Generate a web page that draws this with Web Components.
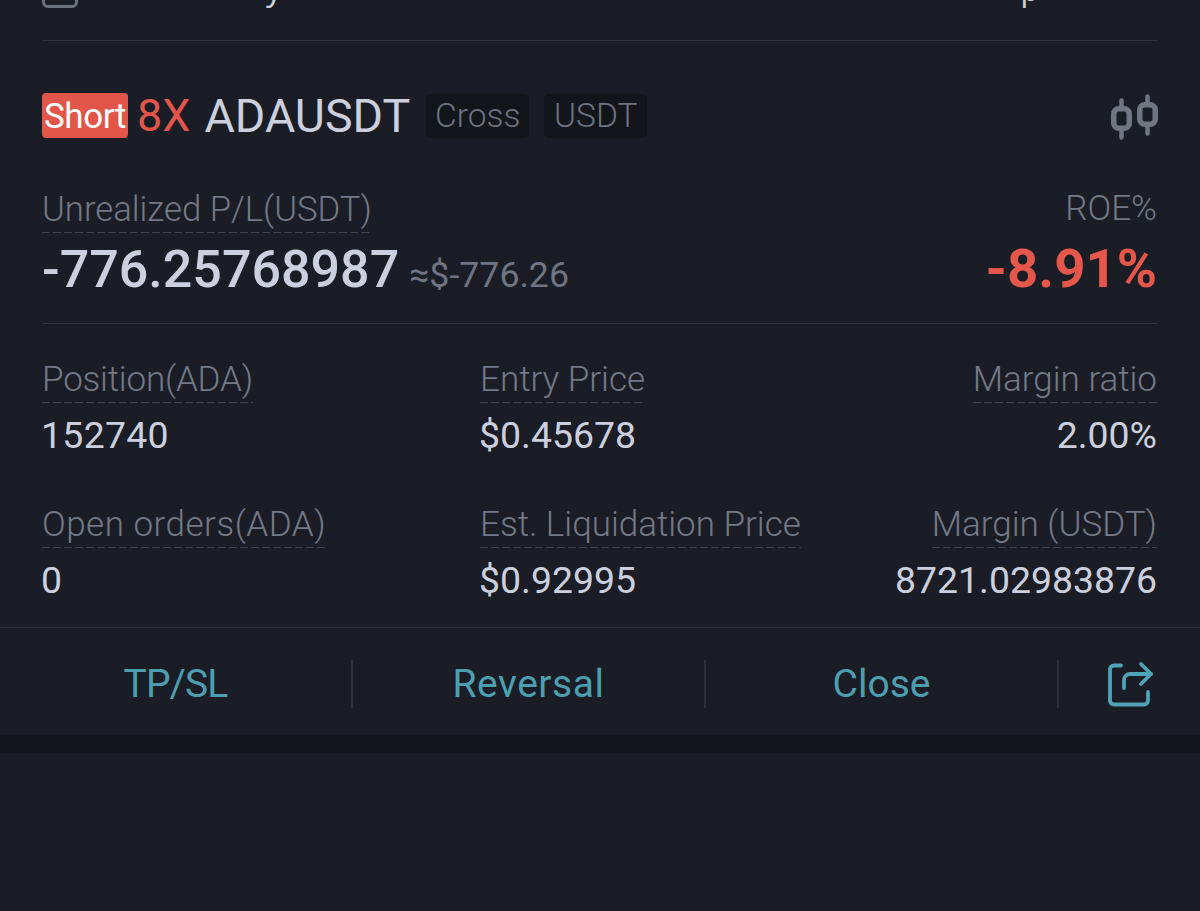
<!DOCTYPE html>
<html><head><meta charset="utf-8"><style>
html,body{margin:0;height:100%;background:#1a1d25}
body{font-family:"Noto Sans",Roboto,sans-serif;overflow:hidden}
</style></head><body>
<position-card>
  <top-remnant slot="top"></top-remnant>
  <card-title slot="title"></card-title>
  <pnl-block slot="pnl"></pnl-block>
  <stat-grid slot="stats">
    <stat-item first label="Position(ADA)" value="152740" vs=".3"></stat-item>
    <stat-item label="Entry Price" value="$0.45678"></stat-item>
    <stat-item align="end" label="Margin ratio" value="2.00%"></stat-item>
    <stat-item first label="Open orders(ADA)" ls=".5" value="0"></stat-item>
    <stat-item label="Est. Liquidation Price" value="$0.92995"></stat-item>
    <stat-item align="end" label="Margin (USDT)" value="8721.02983876"></stat-item>
  </stat-grid>
</position-card>
<action-bar></action-bar>
<script>
function def(name,html){customElements.define(name,class extends HTMLElement{
  constructor(){super();this.attachShadow({mode:'open'}).innerHTML=typeof html==='function'?html(this):html;}
})}
const dash='background:repeating-linear-gradient(90deg,#3f434d 0 8px,transparent 8px 11px) left bottom/100% 1px no-repeat';
def('position-card',`<style>:host{display:block;padding:0 43px}
.sep{height:1px;background:#32353c}
</style><slot name="top"></slot><div class="sep"></div><slot name="title"></slot><slot name="pnl"></slot><div class="sep"></div><slot name="stats"></slot>`);
def('top-remnant',`<style>:host{display:flex;height:8px;overflow:hidden;margin-bottom:32px;margin-left:-1px}
.box{width:36px;height:20px;margin-top:-12px;box-sizing:border-box;border:3px solid #6c727e;border-radius:6px;flex:none}
.t{font-size:30px;line-height:36px;margin-top:-28px;color:#cdd1de}
.a{margin-left:188px}.b{margin-left:auto;margin-right:118px}
</style><div class="box"></div><div class="t a">y</div><div class="t b">p</div>`);
def('card-title',`<style>:host{display:flex;align-items:center;height:45px;margin-top:52px;margin-bottom:51px;margin-left:-1px;font-family:Roboto,sans-serif}
.short{background:#e2564a;color:#fff;border-radius:4px;font-size:35px;height:45px;line-height:48px;width:86px;text-align:center;letter-spacing:-.4px}
.lev{color:#e2564a;font-size:45px;margin-left:9px;font-weight:400;line-height:44px}
.sym{color:#ccd0de;font-size:46.5px;margin-left:14px;font-weight:400;line-height:44px}
.tag{background:#12151a;color:#6d7380;border-radius:5px;font-size:33.5px;font-weight:300;height:44px;line-height:43px;width:103px;text-align:center;margin-left:16px}
.tag+.tag{margin-left:15px}
svg{margin-left:auto;margin-right:-1px;margin-top:3px}
</style><span class="short">Short</span><span class="lev">8X</span><span class="sym">ADAUSDT</span><span class="tag">Cross</span><span class="tag">USDT</span>
<svg width="47" height="46" viewBox="0 0 47 46" fill="none" stroke="#6f7581" stroke-linecap="round"><path d="M10.5 6.5V12M10.5 37V43.5" stroke-width="4.5"/><rect x="2.75" y="14.75" width="15.5" height="19.5" rx="5" stroke-width="5.5"/><path d="M36.5 2.5V8M36.5 33V39.5" stroke-width="4.5"/><rect x="28.75" y="10.75" width="15.5" height="19.5" rx="5" stroke-width="5.5"/></svg>`);
def('pnl-block',`<style>:host{display:block;height:134px;font-family:Roboto,sans-serif}
.row{display:flex;justify-content:space-between;align-items:flex-start}
.base{align-items:baseline;margin-top:7px}
.l{color:#737987;font-size:34.7px;font-weight:300;line-height:38px;padding:1px 0 5px;margin-left:-1px;${dash}}
.r{color:#737987;font-size:35px;font-weight:300;line-height:38px;margin-top:1px}
.n{margin-left:-1px}
.v{font-size:52px;font-weight:500;color:#ccd0de;line-height:56px}
.s{font-size:35.7px;color:#6f7582;margin-left:10px}
.p{font-size:54.5px;font-weight:700;color:#e5574a;line-height:56px}
</style><div class="row"><span class="l">Unrealized P/L(USDT)</span><span class="r">ROE%</span></div>
<div class="row base"><span class="n"><span class="v">-776.25768987</span><span class="s">≈$-776.26</span></span><span class="p">-8.91%</span></div>`);
def('stat-grid',`<style>:host{display:grid;grid-template-columns:437px 1fr auto;row-gap:48px;margin-top:37px}</style><slot></slot>`);
def('stat-item',el=>`<style>:host{display:flex;flex-direction:column;align-items:${el.getAttribute('align')==='end'?'flex-end':'flex-start'};font-family:Roboto,sans-serif;${el.hasAttribute('first')?'margin-left:-1px;':''}}
.l{color:#737987;font-size:35px;font-weight:300;line-height:38px;padding-bottom:4px;letter-spacing:${el.getAttribute('ls')||(el.hasAttribute('first')?'-.2':'0')}px;${dash}}
.v{color:#ccd0de;font-size:37.4px;line-height:45px;margin-top:10px;letter-spacing:${el.getAttribute('vs')||0}px;${el.getAttribute('align')==='end'?'':'margin-left:-1px;'}}
</style><span class="l">${el.getAttribute('label')}</span><span class="v">${el.getAttribute('value')}</span>`);
def('action-bar',`<style>:host{display:block;position:absolute;left:0;right:0;top:627px}
.bar{display:grid;grid-template-columns:353px 353px 353px 1fr;height:107px;border-top:1px solid #2c2f36;box-sizing:border-box;align-items:center;padding-top:6px}
.b{height:48px;display:flex;align-items:center;justify-content:center;color:#4c9fb0;font:39px Roboto,sans-serif;border-right:2px solid #2e3138}
.i{display:flex;justify-content:center;padding-left:3px}
svg{display:block}
.band{height:18px;background:#13161b;margin-top:1px}
</style><div class="bar"><div class="b" style="letter-spacing:-.8px">TP/SL</div><div class="b" style="letter-spacing:.5px">Reversal</div><div class="b">Close</div><div class="i">
<svg width="48" height="48" viewBox="0 0 48 48" fill="none" stroke="#4fa3b6" stroke-width="3.8" stroke-linecap="round" stroke-linejoin="round"><path d="M14 5.5H7a4 4 0 0 0-4 4v31a4 4 0 0 0 4 4h30a4 4 0 0 0 4-4V32"/><path d="M17 28v-8a6 6 0 0 1 6-6h21"/><path d="M34 4l10 10-10 10"/></svg></div></div><div class="band"></div>`);
</script></body></html>
